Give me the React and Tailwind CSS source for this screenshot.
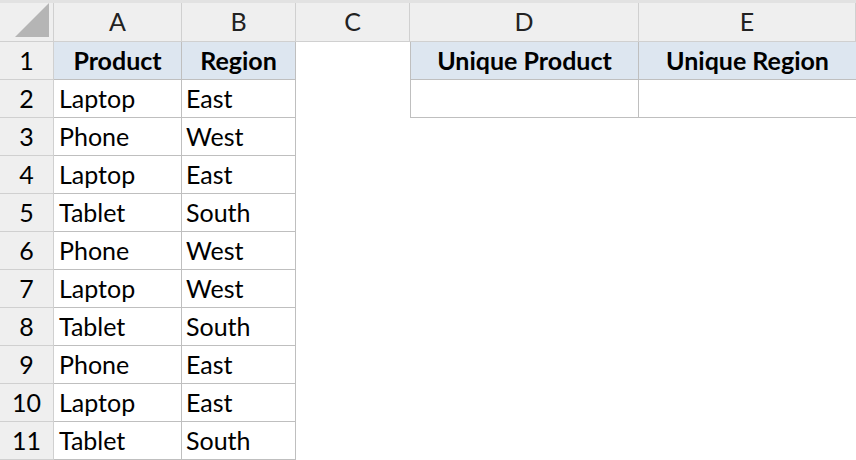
const data = [
  ["Laptop", "East"], ["Phone", "West"], ["Laptop", "East"], ["Tablet", "South"],
  ["Phone", "West"], ["Laptop", "West"], ["Tablet", "South"], ["Phone", "East"],
  ["Laptop", "East"], ["Tablet", "South"],
];

const cols = ["A", "B", "C", "D", "E"];

function Cell({ children, className = "" }) {
  return <div className={"h-[38px] flex items-center text-[25px] text-black " + className}>{children}</div>;
}

export default function App() {
  return (
    <div className="w-[856px] h-[460px] bg-white overflow-hidden" style={{ fontFamily: "Lato, 'Open Sans', sans-serif" }}>
      <div className="grid grid-cols-[54px_128px_114px_114px_229px_217px] border-t-[3px] border-[#e2e2e2]">
        {/* column headers */}
        <div className="h-[39px] bg-[#efefef] border-r border-b border-[#d0d0d0] relative">
          <div className="absolute right-1 bottom-1 w-0 h-0 border-l-[34px] border-l-transparent border-b-[34px] border-b-[#b5b5b5]" />
        </div>
        {cols.map((c) => (
          <div key={c} className="h-[39px] bg-[#efefef] border-r border-b border-[#d0d0d0] flex items-center justify-center text-[25px] text-[#222]">{c}</div>
        ))}

        {/* row 1 */}
        <Cell className="bg-[#efefef] border-r border-b border-[#d0d0d0] justify-center">1</Cell>
        <Cell className="bg-[#dde6f0] border-r border-b border-[#bfbfbf] justify-center font-bold">Product</Cell>
        <Cell className="bg-[#dde6f0] border-r border-b border-[#bfbfbf] justify-center font-bold">Region</Cell>
        <Cell />
        <Cell className="bg-[#dde6f0] border-l border-r border-b border-[#bfbfbf] justify-center font-bold">Unique Product</Cell>
        <Cell className="bg-[#dde6f0] border-b border-[#bfbfbf] justify-center font-bold">Unique Region</Cell>

        {data.map(([p, r], i) => (
          <div key={i} className="contents">
            <Cell className="bg-[#efefef] border-r border-b border-[#d0d0d0] justify-center">{i + 2}</Cell>
            <Cell className="border-r border-b border-[#bfbfbf] pl-[5px]">{p}</Cell>
            <Cell className="border-r border-b border-[#bfbfbf] pl-[4px]">{r}</Cell>
            <Cell />
            {i === 0 ? (
              <>
                <Cell className="border-l border-r border-b border-[#bfbfbf]" />
                <Cell className="border-b border-[#bfbfbf]" />
              </>
            ) : (
              <>
                <Cell />
                <Cell />
              </>
            )}
          </div>
        ))}
      </div>
    </div>
  );
}
